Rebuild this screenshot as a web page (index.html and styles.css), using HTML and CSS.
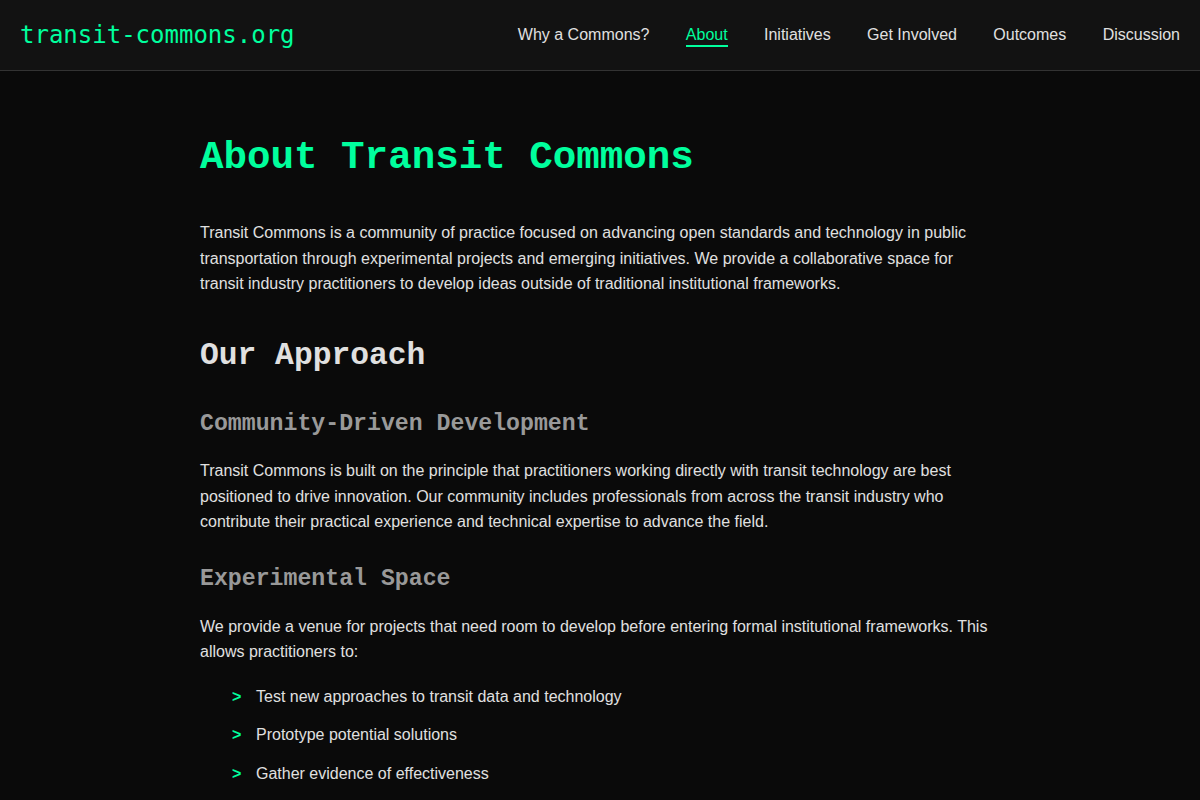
FILE: index.html
```html
<!DOCTYPE html>
<html lang="en">
<head>
<meta charset="utf-8">
<title>About - transit-commons.org</title>
<link rel="stylesheet" href="styles.css">
</head>
<body>
<header class="site-header">
  <a class="logo" href="#">transit-commons.org</a>
  <nav class="nav">
    <a class="nav-link" href="#">Why a Commons?</a>
    <a class="nav-link active" href="#">About</a>
    <a class="nav-link" href="#">Initiatives</a>
    <a class="nav-link" href="#">Get Involved</a>
    <a class="nav-link" href="#">Outcomes</a>
    <a class="nav-link" href="#">Discussion</a>
  </nav>
</header>
<main class="content">
  <h1 class="page-title">About Transit Commons</h1>
  <p class="text">Transit Commons is a community of practice focused on advancing open standards and technology in public transportation through experimental projects and emerging initiatives. We provide a collaborative space for transit industry practitioners to develop ideas outside of traditional institutional frameworks.</p>
  <h2 class="section-title">Our Approach</h2>
  <h3 class="sub-title">Community-Driven Development</h3>
  <p class="text">Transit Commons is built on the principle that practitioners working directly with transit technology are best positioned to drive innovation. Our community includes professionals from across the transit industry who contribute their practical experience and technical expertise to advance the field.</p>
  <h3 class="sub-title">Experimental Space</h3>
  <p class="text">We provide a venue for projects that need room to develop before entering formal institutional frameworks. This allows practitioners to:</p>
  <ul class="arrow-list">
    <li class="arrow-item">Test new approaches to transit data and technology</li>
    <li class="arrow-item">Prototype potential solutions</li>
    <li class="arrow-item">Gather evidence of effectiveness</li>
  </ul>
</main>
</body>
</html>
```
FILE: styles.css
```css
html, body {
  margin: 0;
  padding: 0;
}
body {
  background: #0a0a0a;
  color: #e0e0e0;
  font-family: "Liberation Sans", Arial, sans-serif;
  font-size: 16px;
  line-height: 1.6;
}
.site-header {
  height: 70px;
  box-sizing: content-box;
  background: #121212;
  border-bottom: 1px solid #333;
  display: flex;
  align-items: center;
  justify-content: space-between;
  padding: 0 20px;
}
.logo {
  font-family: "DejaVu Sans Mono", monospace;
  font-size: 24px;
  color: #00ff9d;
  text-decoration: none;
  line-height: 1;
}
.nav {
  display: flex;
  gap: 36.4px;
  align-items: center;
}
.nav-link {
  color: #e0e0e0;
  text-decoration: none;
  font-size: 16px;
  line-height: 18px;
  padding-top: 2px;
  padding-bottom: 1px;
  border-bottom: 2px solid transparent;
}
.nav-link.active {
  color: #00ff9d;
  border-bottom-color: #00ff9d;
}
.content {
  max-width: 800px;
  margin: 0 auto;
  padding: 63px 0 40px;
}
.page-title {
  font-family: "Liberation Mono", "Courier New", monospace;
  font-size: 39.2px;
  line-height: 48px;
  font-weight: bold;
  color: #00ff9d;
  margin: 0 0 38px;
}
.text {
  margin: 0 0 19px;
}
.section-title {
  font-family: "Liberation Mono", "Courier New", monospace;
  font-size: 31.3px;
  line-height: 38px;
  font-weight: bold;
  color: #e0e0e0;
  margin: 40px 0 35px;
}
.sub-title {
  font-family: "Liberation Mono", "Courier New", monospace;
  font-size: 23.2px;
  line-height: 28px;
  font-weight: bold;
  color: #999;
  margin: 30px 0 20.5px;
}
.arrow-list {
  list-style: none;
  margin: 0;
  padding: 0 0 0 32px;
}
.arrow-item {
  position: relative;
  padding-left: 24px;
  margin-bottom: 12.8px;
}
.arrow-item::before {
  content: ">";
  position: absolute;
  left: 0;
  top: 0;
  color: #00ff9d;
  font-weight: bold;
}
```
